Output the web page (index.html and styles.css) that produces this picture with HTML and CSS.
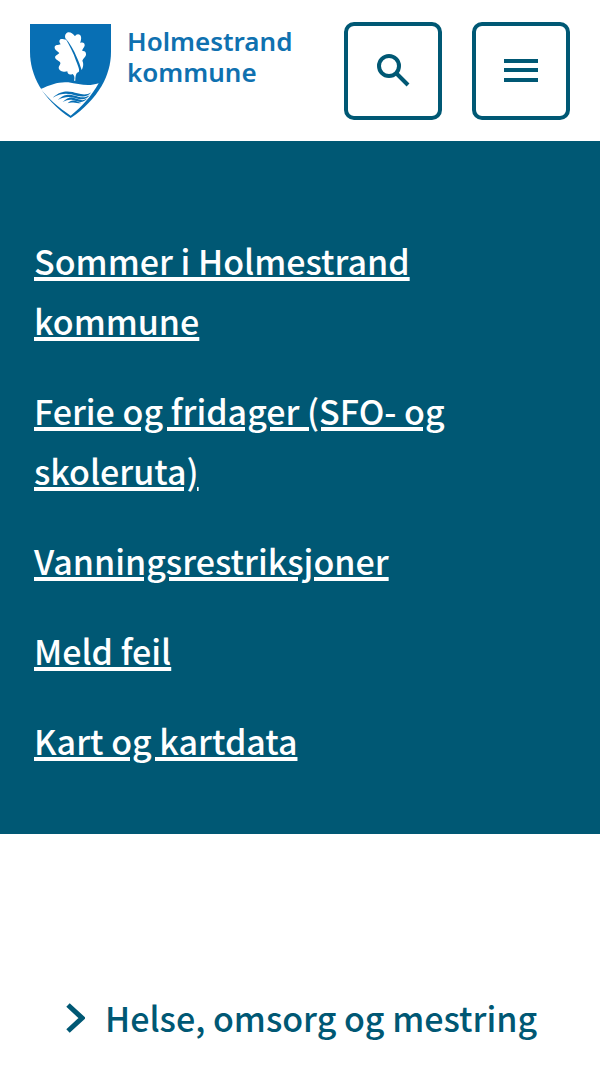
FILE: index.html
```html
<!DOCTYPE html>
<html lang="no">
<head>
    <meta charset="UTF-8">
    <meta name="viewport" content="width=device-width, initial-scale=1.0">
    <title>Holmestrand kommune</title>
    <link rel="stylesheet" href="styles.css">
</head>
<body>
    <header class="header">
        <a href="#" class="logo">
            <svg class="logo-shield" viewBox="27 24 249 288" aria-hidden="true">
                <path fill="#086fb4" d="M30 27H273V110C273 180 236 251 152 309C66 251 30 180 30 110Z"/>
                <path fill="#fff" d="M62 222C92 208 119 199 145 202C177 207 204 216 236 205C214 244 185 276 152 302C116 278 85 251 62 222Z"/>
                <path fill="#fff" d="M162 197C165 188 163 181 158 177C148 181 142 177 142 169C132 173 117 168 116 158C117 150 125 146 119 140C110 135 103 130 106 124C110 118 116 118 118 114C111 107 103 105 104 96C105 89 115 91 122 88C117 82 117 76 121 73C126 70 132 74 138 74C133 65 135 55 144 52C153 51 160 58 165 64C168 57 176 55 181 61C186 68 182 78 181 84C188 81 195 84 194 92C192 98 186 103 187 108C195 107 199 112 198 120C196 127 190 130 187 137C192 146 189 158 185 165C181 153 176 139 170 126C162 106 151 86 135 68C149 91 160 113 168 137C175 154 180 166 176 171C170 173 166 178 166 197Z"/>
                <g fill="#086fb4">
                    <path d="M98 248C128 222 152 230 172 235C189 240 202 240 214 232C202 247 187 246 170 242C147 236 129 231 98 248Z"/>
                    <path d="M113 255C138 231 157 240 175 245C188 249 199 247 209 241C198 255 187 254 173 251C153 246 139 241 113 255Z"/>
                    <path d="M128 261C148 240 162 248 175 253C185 257 194 256 202 250C192 263 181 262 171 259C155 253 147 251 128 261Z"/>
                    <path d="M143 265C156 250 166 258 184 264C168 267 157 259 143 265Z"/>
                </g>
            </svg>
            <span class="logo-text">Holmestrand<br>kommune</span>
        </a>
        <div class="header-buttons">
            <button type="button" class="icon-btn" aria-label="Søk">
                <svg viewBox="0 0 34 34" aria-hidden="true">
                    <circle cx="13" cy="12" r="10"/>
                    <path d="M20 19L32 31"/>
                </svg>
            </button>
            <button type="button" class="icon-btn" aria-label="Meny">
                <svg viewBox="0 0 34 34" aria-hidden="true">
                    <path d="M0 7H34M0 16H34M0 26H34"/>
                </svg>
            </button>
        </div>
    </header>

    <nav class="shortcuts" aria-label="Snarveier">
        <ul>
            <li><a href="#">Sommer i Holmestrand kommune</a></li>
            <li><a href="#">Ferie og fridager (SFO- og skoleruta)</a></li>
            <li><a href="#">Vanningsrestriksjoner</a></li>
            <li><a href="#">Meld feil</a></li>
            <li><a href="#">Kart og kartdata</a></li>
        </ul>
    </nav>

    <main class="services">
        <a href="#" class="service-link">
            <svg viewBox="0 0 20 30" aria-hidden="true">
                <path d="M3 2L17 15L3 28"/>
            </svg>
            <span>Helse, omsorg og mestring</span>
        </a>
    </main>
</body>
</html>
```
FILE: styles.css
```css
* {
    margin: 0;
    padding: 0;
    box-sizing: border-box;
}

body {
    font-family: "Noto Sans CJK JP", "Noto Sans", sans-serif;
    font-size: 34px;
    font-weight: 500;
    line-height: 60px;
    color: #005874;
    background-color: #fff;
}

.header {
    display: flex;
    justify-content: space-between;
    align-items: flex-start;
    padding: 22px 30px 21px 29px;
}

.logo {
    display: flex;
    gap: 15px;
    padding-top: 1px;
    color: #0f71b0;
    text-decoration: none;
}

.logo-shield {
    width: 83px;
    height: 96px;
}

.logo-text {
    display: block;
    padding-top: 3px;
    font-family: "Noto Sans", sans-serif;
    font-size: 26px;
    font-weight: 600;
    line-height: 31px;
}

.header-buttons {
    display: flex;
    gap: 30px;
}

.icon-btn {
    display: flex;
    justify-content: center;
    align-items: center;
    width: 98px;
    height: 98px;
    border: 4px solid #005874;
    border-radius: 10px;
    background-color: #fff;
    cursor: pointer;
}

.icon-btn svg {
    width: 34px;
    height: 34px;
    fill: none;
    stroke: #005874;
    stroke-width: 4;
}

.shortcuts {
    padding: 90px 34px 63px;
    background-color: #005874;
}

.shortcuts ul {
    display: flex;
    flex-direction: column;
    gap: 30px;
    list-style: none;
}

.shortcuts a {
    color: #fff;
    text-decoration-thickness: 4px;
}

.services {
    padding: 154px 30px 16px 65px;
}

.service-link {
    display: flex;
    align-items: center;
    gap: 20px;
    color: #005874;
    text-decoration: none;
}

.service-link svg {
    flex-shrink: 0;
    width: 20px;
    height: 30px;
    fill: none;
    stroke: #005874;
    stroke-width: 5;
}
```
